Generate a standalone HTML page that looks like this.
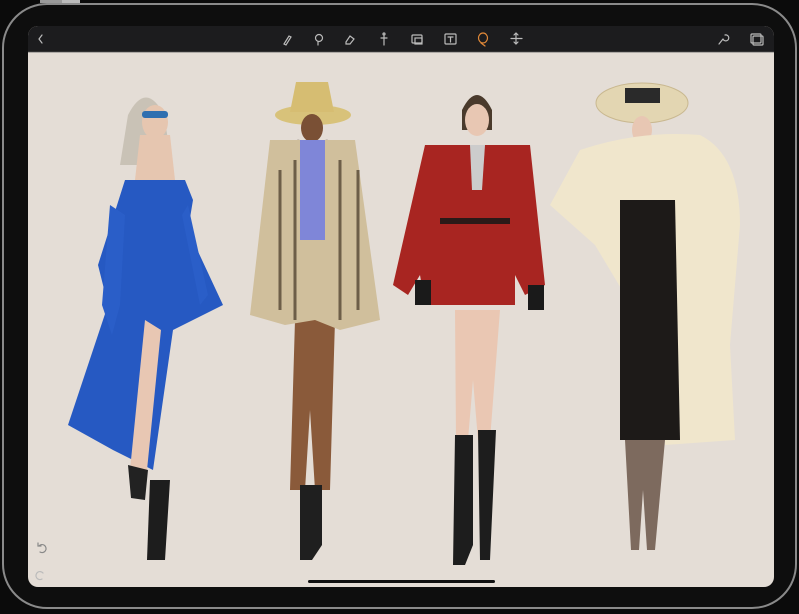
<!DOCTYPE html>
<html><head><meta charset="utf-8"><style>
html,body{margin:0;padding:0;width:799px;height:614px;background:#0a0a0a;overflow:hidden;font-family:"Liberation Sans",sans-serif}
</style></head><body>
<svg width="799" height="614" viewBox="0 0 799 614" xmlns="http://www.w3.org/2000/svg">
<rect width="799" height="614" fill="#0b0b0b"/>
<rect x="3" y="4" width="793" height="604" rx="44" fill="#0e0e0e" stroke="#8a8a8a" stroke-width="2"/>
<rect x="40" y="0" width="40" height="3" fill="#9a9a9a"/><rect x="62" y="0" width="18" height="3" fill="#bbb"/>
<rect x="28" y="26" width="746" height="561" rx="10" fill="#e4ddd6"/>
<path d="M28 36a10 10 0 0 1 10-10h726a10 10 0 0 1 10 10v16H28z" fill="#1c1c1e"/>
<line x1="28" y1="52" x2="774" y2="52" stroke="#555" stroke-width="0.8"/>
<g stroke="#bbb" stroke-width="1.2" fill="none" stroke-linecap="round">
<path d="M42 35l-3 4 3 4"/>
<path d="M284 44l5-8 2 1-5 8z"/>
<circle cx="319" cy="38" r="3.5"/><path d="M318 42v3"/>
<path d="M346 42l4-6 4 3-4 5h-4z"/>
<circle cx="384" cy="34" r="1"/><path d="M384 36v9M381 38h6"/>
<rect x="412" y="35" width="10" height="8" rx="1"/><rect x="415" y="38" width="7" height="6"/>
<rect x="445" y="34" width="11" height="10" rx="1"/><path d="M448 37h5M450.5 37v5"/>
<ellipse cx="483" cy="38" rx="4.5" ry="5" stroke="#e08838"/><path d="M481 43l4 3" stroke="#e08838"/>
<path d="M516 33v11M511 38.5h11M514 35l2-2 2 2M514 42l2 2 2-2"/>
<path d="M719 44l4-5M723 39a3 3 0 1 0 2-4"/>
<rect x="751" y="34" width="10" height="9" rx="1"/><rect x="753" y="36" width="10" height="9" rx="1"/>
<path d="M39 546a4 4 0 1 1 1 6M38 543v3h3" stroke="#888"/>
<path d="M43 573a4 4 0 1 0-1 6" stroke="#bbb"/>
</g>
<rect x="308" y="580" width="187" height="3" rx="1.5" fill="#111"/>
<!-- figure 1 -->
<g>
<path d="M128 115q18-35 36 0l8 50-52 0z" fill="#c9c2b6"/>
<path d="M140 135h30l5 45h-40z" fill="#e6c6b0"/>
<ellipse cx="155" cy="122" rx="13" ry="17" fill="#e6c6b0"/>
<rect x="142" y="111" width="26" height="7" rx="3" fill="#2f6fb0"/>
<path d="M125 180h60l8 20 -5 30 35 75-50 25-20 140-40-20-45-25 40-120-10-40z" fill="#2659c2"/>
<path d="M110 205l-8 100 10 30 8-30 5-90z" fill="#2a5ec8"/>
<path d="M188 205l20 90-8 10-18-90z" fill="#2a5ec8"/>
<path d="M145 320l-15 150 16 10 15-150z" fill="#e8c7b3"/>
<path d="M128 465l20 5-3 30-14-2z" fill="#222"/>
<path d="M150 480h20l-5 80h-18z" fill="#1d1d1d"/>
</g>
<!-- figure 2 -->
<g>
<ellipse cx="313" cy="115" rx="38" ry="10" fill="#d8c27a"/>
<path d="M290 112l6-30h32l6 30z" fill="#d6bd72"/>
<ellipse cx="312" cy="128" rx="11" ry="14" fill="#7a5035"/>
<path d="M300 140l-5 60M325 140l6 60" stroke="#3a2a20" stroke-width="5"/>
<path d="M295 320h40l-5 170h-15l-5-80-5 80h-15z" fill="#8a5a3a"/>
<path d="M270 140h85l25 180-40 10-25-10-30 5-35-10z" fill="#d0bf9c"/>
<path d="M300 140h25v100h-25z" fill="#7f86d8"/>
<path d="M280 170v140M295 160v160M340 160v160M358 170v140" stroke="#6d5e48" stroke-width="3"/>
<path d="M300 485h22v60l-10 15h-12z" fill="#1f1f1f"/>
</g>
<!-- figure 3 -->
<g>
<path d="M462 110q15-30 30 0v20h-30z" fill="#4a3a2c"/>
<ellipse cx="477" cy="120" rx="12" ry="16" fill="#e8c7b3"/>
<path d="M425 145h105l15 140-20 10-10-20v30h-90l-5-30-12 20-15-10z" fill="#a82521"/>
<path d="M470 145h15l-3 45h-10z" fill="#ccc"/>
<rect x="440" y="218" width="70" height="6" fill="#2a1a18"/>
<path d="M415 280h16v25h-16zM528 285h16v25h-16z" fill="#1a1a1a"/>
<path d="M455 310h45l-10 130h-12l-5-60-5 60h-12z" fill="#eac7b3"/>
<path d="M455 435h18v110l-8 20h-12zM478 430h18l-6 130h-10z" fill="#1d1d1d"/>
</g>
<!-- figure 4 -->
<g>
<ellipse cx="642" cy="103" rx="46" ry="20" fill="#e3d6b2" stroke="#c9b890"/>
<rect x="625" y="88" width="35" height="15" fill="#2a2a2a"/>
<ellipse cx="642" cy="130" rx="10" ry="14" fill="#e8c7b3"/>
<path d="M580 150q60-20 120-15q40 20 40 90l-10 120 5 95-70 5 0-160-40 10-30-50-45-40z" fill="#f0e6cc"/>
<path d="M620 200h55l5 240h-60z" fill="#1d1a18"/>
<path d="M625 440h40l-10 110h-8l-4-60-4 60h-8z" fill="#7d6a5e"/>
</g>
</svg>
</body></html>
